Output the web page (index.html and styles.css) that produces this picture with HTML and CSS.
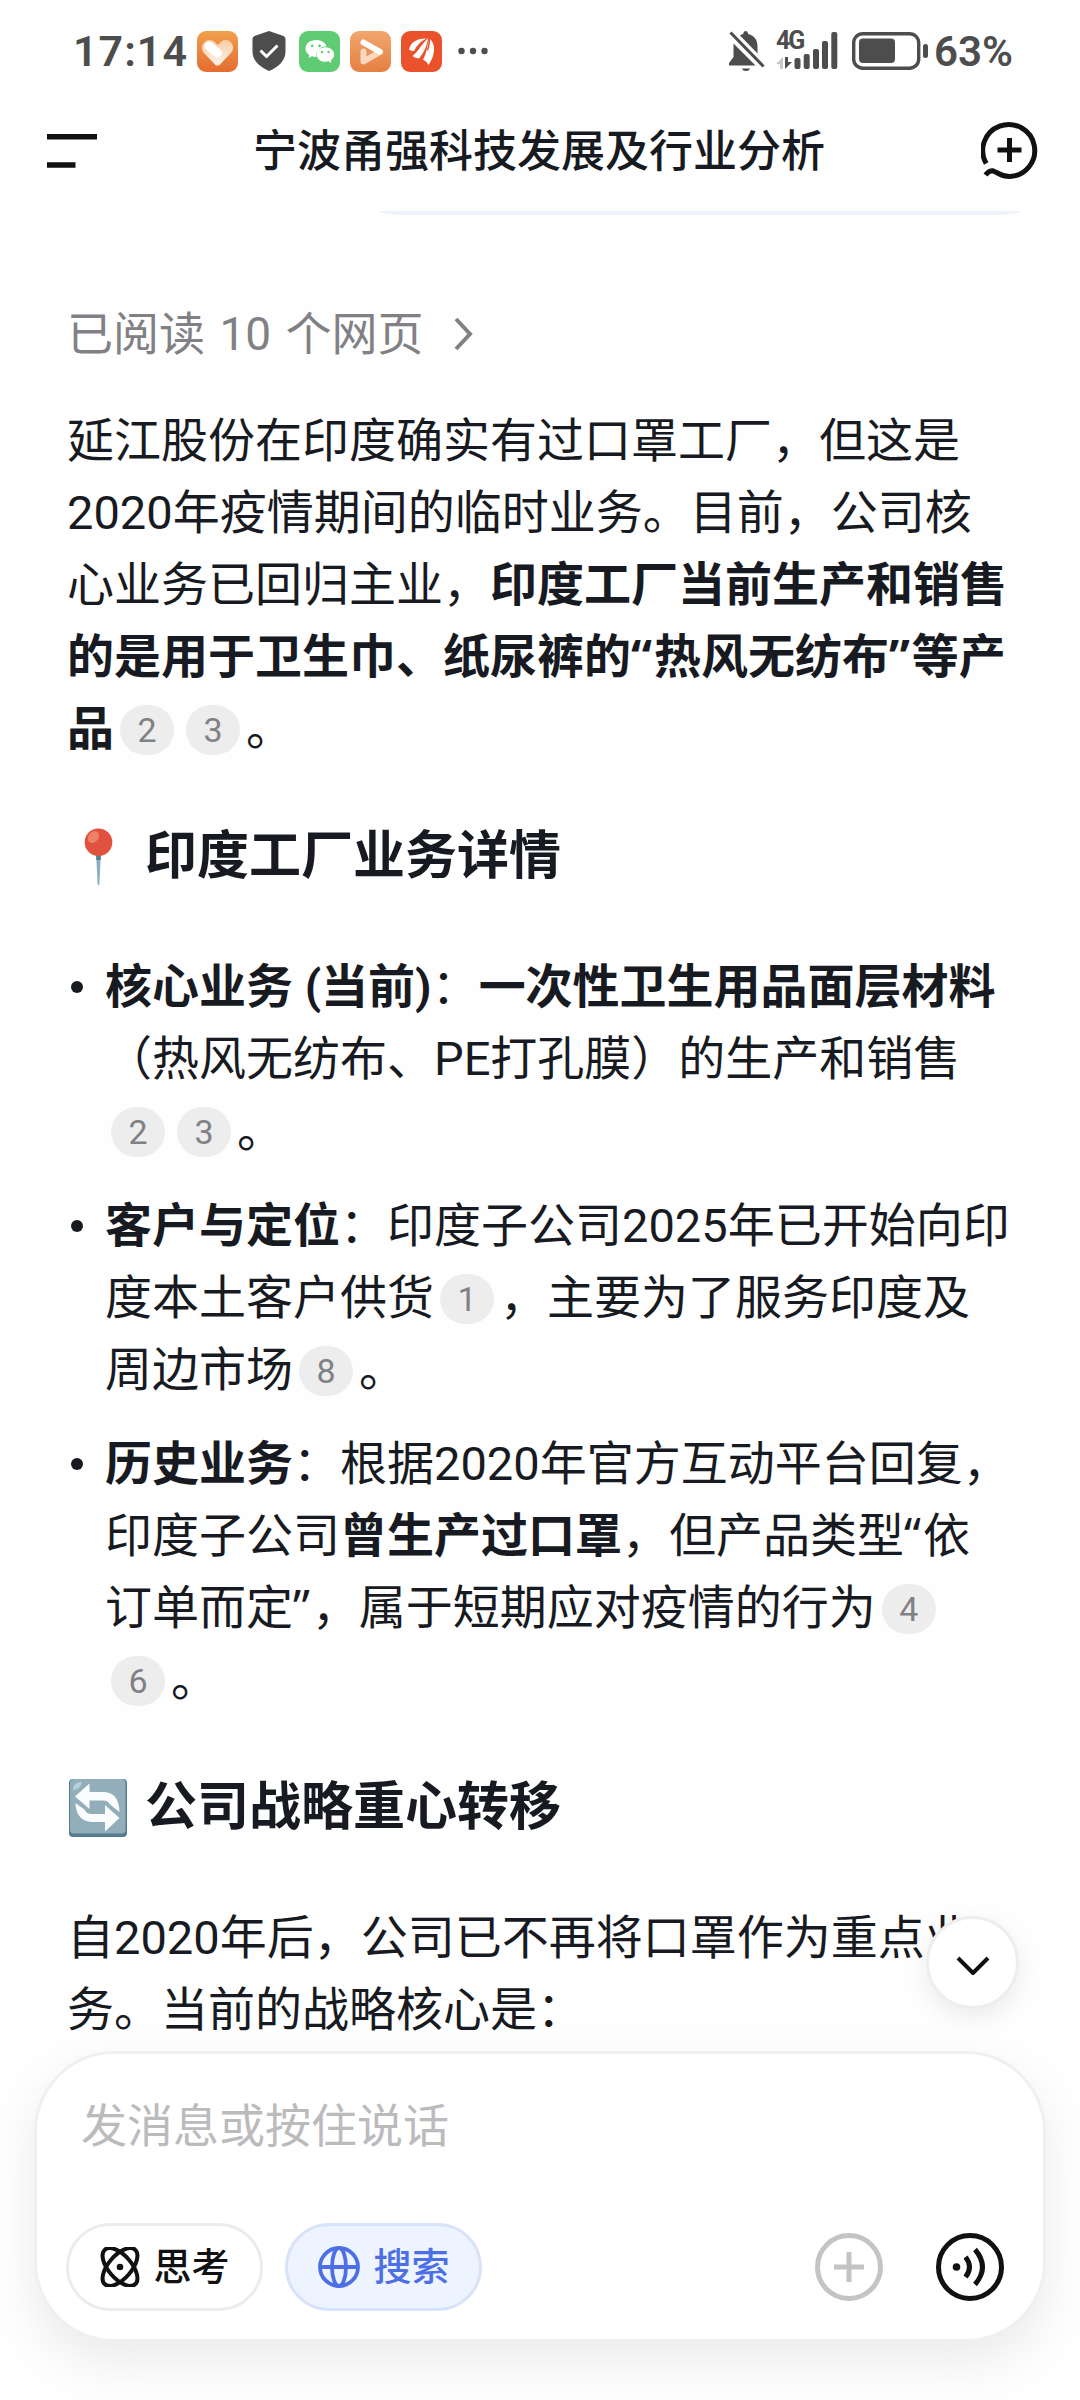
FILE: index.html
```html
<!DOCTYPE html>
<html lang="zh-CN">
<head>
  <meta charset="UTF-8">
  <meta name="viewport" content="width=device-width, initial-scale=1.0">
  <title>宁波甬强科技发展及行业分析</title>
  <link rel="stylesheet" href="styles.css">
</head>
<body>

<div class="screen">
  <!-- Status bar -->
  <div class="status-bar">
    <div class="status-left">
      <span class="clock">17:14</span>
      <svg class="app-icon" viewBox="0 0 41 41">
        <defs>
          <linearGradient id="heartBg" x1="0" y1="0" x2="0" y2="1"><stop offset="0" stop-color="#f0a04c"/><stop offset="1" stop-color="#e56c31"/></linearGradient>
          <linearGradient id="heartFade" x1="0" y1="0" x2="0" y2="1"><stop offset="0" stop-color="#f8cda8"/><stop offset="1" stop-color="#fff3ea"/></linearGradient>
        </defs>
        <rect width="41" height="41" rx="9" fill="url(#heartBg)"/>
        <path d="M20.500 34.500c-1 0-2-.6-3-1.600L7.500 22.500c-3.500-3.800-3-8.500-.2-11.300 3.300-3 7.700-2.900 10.600 0l2.800 2.700 2.800-2.700c3-2.900 7.600-2.800 10.500.2 2.800 3 2.700 7.500-.2 10.700L23.500 32.900c-1 1-2 1.600-3 1.600z" fill="url(#heartFade)"/>
        <path d="M12 15l8.500 7" stroke="#fff" stroke-width="9" stroke-linecap="round"/>
      </svg>
      <svg class="shield-icon" viewBox="0 0 34 40">
        <path d="M17 0l14.500 5q2 .8 2 3v12.500c0 9-7 15.500-16.500 19.500C7.500 36 .5 29.500.5 20.500V8q0-2.200 2-3z" fill="#4d4d4d"/>
        <path d="M8.500 19.500l6 6 11-11" fill="none" stroke="#fff" stroke-width="3"/>
      </svg>
      <svg class="app-icon" viewBox="0 0 41 41">
        <rect width="41" height="41" rx="9" fill="#5fcc74"/>
        <path d="M17 9C10.800 9 6.500 12.800 6.500 17.500c0 2.700 1.500 5 3.800 6.600l-.8 3 3.500-1.800c1.300.4 2.700.6 4.200.6-.8-5.800 4-10.600 10.300-10.600C26.500 11.600 22.300 9 17 9z" fill="#fff"/>
        <path d="M26.300 16.300c-5 0-8.800 3.200-8.800 7.200s3.800 7.300 8.800 7.300c1.200 0 2.300-.2 3.300-.5l3 1.600-.7-2.600c2-1.400 3.300-3.500 3.300-5.800 0-4-4-7.200-8.900-7.200z" fill="#fff"/>
        <g fill="#5fcc74"><circle cx="13.200" cy="14.800" r="1.400"/><circle cx="20.500" cy="14.800" r="1.400"/><circle cx="23" cy="21" r="1.200"/><circle cx="29.500" cy="21" r="1.200"/></g>
      </svg>
      <svg class="app-icon" viewBox="0 0 41 41">
        <defs>
          <linearGradient id="playBg" x1="0" y1="0" x2="0" y2="1"><stop offset="0" stop-color="#f0a76e"/><stop offset="1" stop-color="#e67f42"/></linearGradient>
        </defs>
        <rect width="41" height="41" rx="9" fill="url(#playBg)"/>
        <path d="M13.500 20.500V30.500L30 21" fill="none" stroke="#f9d8bf" stroke-width="6" stroke-linecap="round" stroke-linejoin="round"/>
        <path d="M13.500 11.500L29.500 20.500" stroke="#fff" stroke-width="6" stroke-linecap="round"/>
      </svg>
      <svg class="app-icon" viewBox="0 0 41 41">
        <rect width="41" height="41" rx="9" fill="#ea522b"/>
        <path d="M8 18.500C9.500 11.500 16 7 26 7.500 20.500 9.500 16.500 13.500 13 20q-2.500.2-5-1.500z" fill="#fff"/>
        <path d="M11.500 25C18 20 21 12 27.200 7.500 25.500 15 23.500 21 18 27.500q-4-.2-6.500-2.500z" fill="#fff"/>
        <path d="M22 28.500C26 22 26 14 28.500 7.500 35 13 34.500 24 27.500 34q-1.500-3.500-5.500-5.500z" fill="#fff"/>
        <path d="M28.500 7.500q-.2 7.500-2.200 12" fill="none" stroke="#ea522b" stroke-width="1.500"/>
      </svg>
      <svg class="more-icon" viewBox="0 0 30 8"><circle cx="3.500" cy="4" r="3.200"/><circle cx="15" cy="4" r="3.200"/><circle cx="26.500" cy="4" r="3.200"/></svg>
    </div>
    <div class="status-right">
      <svg class="mute-icon" viewBox="0 0 36 40">
        <path d="M11 4.500c1-.8 2-1.300 3.200-1.600.3-1.700 1.200-2.900 2.500-2.900s2.200 1.200 2.500 2.900C25.500 4.500 28.500 9 28.500 15v7.500z"/>
        <path d="M4.500 12.500L26.500 34.500H0v-2.500l4.500-6z"/>
        <path d="M13 37.500h8c-.5 1.700-2 2.500-4 2.500s-3.500-.8-4-2.500z"/>
        <path d="M1.500 1.500l33 34" stroke="#4d4d4d" stroke-width="3"/>
      </svg>
      <div class="signal">
        <span class="network">4G</span>
        <svg class="signal-icon" viewBox="0 0 62 40">
          <path d="M7 26v12H4v-5H0z" fill="#c8c8c8"/>
          <path d="M9 26v12l7-7h-4v-5z"/>
          <rect x="18.500" y="27" width="6" height="11" rx="2"/>
          <rect x="27.700" y="23" width="6" height="15" rx="2"/>
          <rect x="37" y="18" width="6" height="20" rx="2"/>
          <rect x="46" y="10" width="6" height="28" rx="2"/>
          <rect x="55.300" y="1" width="6" height="37" rx="2"/>
        </svg>
      </div>
      <svg class="battery-icon" viewBox="0 0 77 38">
        <rect x="1.700" y="1.700" width="65" height="34.500" rx="9" fill="none" stroke="#4d4d4d" stroke-width="3.400"/>
        <rect x="7" y="6.500" width="36" height="24.500" rx="4"/>
        <rect x="71" y="12" width="5" height="14" rx="2.500"/>
      </svg>
      <span class="percent">63%</span>
    </div>
  </div>

  <!-- Title bar -->
  <header class="title-bar">
    <svg class="menu-icon" viewBox="0 0 50 34"><path d="M0 2.800h50M0 31h28.500" stroke="#111" stroke-width="5.500"/></svg>
    <h1>宁波甬强科技发展及行业分析</h1>
    <svg class="new-chat-icon" viewBox="0 0 58 60" fill="none" stroke="#111" stroke-width="5">
      <path d="M5.200 42.500A26 26 0 1 1 28.500 55.500C20 55.500 17 51.500 12 49.800Q8 49.500 4.500 54"/>
      <path d="M28.500 17v24M16.500 29h24"/>
    </svg>
  </header>
  <div class="bubble-edge"></div>

  <!-- Answer -->
  <main class="answer">
    <div class="sources">
      <span>已阅读 10 个网页</span>
      <svg class="chevron-right" viewBox="0 0 20 34"><path d="M2 2l14 15L2 32" fill="none" stroke="#818185" stroke-width="4"/></svg>
    </div>

    <p class="intro">延江股份在印度确实有过口罩工厂，但这是<br>2020年疫情期间的临时业务。目前，公司核<br>心业务已回归主业，<strong>印度工厂当前生产和销售<br>的是用于卫生巾、纸尿裤的<span class="quote">“</span>热风无纺布<span class="quote">”</span>等产<br>品</strong><span class="cite">2</span><span class="cite">3</span>。</p>

    <h2>
      <svg class="emoji" viewBox="0 0 58 58">
        <path d="M27.200 26h4.600l-1.300 29q-1 5-2 0z" fill="#8ab0bf"/>
        <path d="M27.200 26h4.600v6h-4.600z" fill="#547f92"/>
        <circle cx="29.500" cy="14.200" r="13.800" fill="#e0513f"/>
        <ellipse cx="24.500" cy="9" rx="5" ry="6.500" transform="rotate(35 24.500 9)" fill="#ee8066"/>
      </svg>
      <span>印度工厂业务详情</span>
    </h2>

    <ul>
      <li><strong>核心业务 (当前)</strong>：<strong>一次性卫生用品面层材料</strong><br>（热风无纺布、PE打孔膜）的生产和销售<br><span class="cite">2</span><span class="cite">3</span>。</li>
      <li><strong>客户与定位</strong>：印度子公司2025年已开始向印<br>度本土客户供货<span class="cite">1</span>，主要为了服务印度及<br>周边市场<span class="cite">8</span>。</li>
      <li><strong>历史业务</strong>：根据2020年官方互动平台回复，<br>印度子公司<strong>曾生产过口罩</strong>，但产品类型<span class="quote">“</span>依<br>订单而定<span class="quote">”</span>，属于短期应对疫情的行为<span class="cite">4</span><br><span class="cite">6</span>。</li>
    </ul>

    <h2>
      <svg class="emoji" viewBox="0 0 58 58">
        <rect width="58" height="58" rx="4" fill="#557b8d"/>
        <rect x="1" width="55.500" height="54.500" rx="4" fill="#92aebb"/>
        <path d="M4 11q0-8 9-8-1 7-9 8z" fill="#b4d0dc"/>
        <path d="M6 17.500L20.500 4.500V13H34Q50 13 50.500 33L41 25.500Q39 21.500 34 21.500H20.500V30z" fill="#fbfcfd"/>
        <path d="M50.500 39L36 52.500V43H23Q7 42 6.500 24L16 31Q17 35 23 35H36V26z" fill="#fbfcfd"/>
      </svg>
      <span>公司战略重心转移</span>
    </h2>

    <p class="strategy">自2020年后，公司已不再将口罩作为重点业<br>务。当前的战略核心是：</p>
  </main>

  <button class="scroll-down">
    <svg viewBox="0 0 34 20"><path d="M2 2l15 15L32 2" fill="none" stroke="#111" stroke-width="4" stroke-linejoin="round"/></svg>
  </button>

  <!-- Message input -->
  <footer class="composer">
    <div class="placeholder">发消息或按住说话</div>
    <div class="tools">
      <button class="pill">
        <svg class="atom-icon" viewBox="0 0 40 40" fill="none" stroke="#111" stroke-width="4">
          <ellipse cx="20" cy="20" rx="23" ry="11.500" transform="rotate(49 20 20)"/>
          <ellipse cx="20" cy="20" rx="23" ry="11.500" transform="rotate(-49 20 20)"/>
          <circle cx="20" cy="20" r="3.300" fill="#111" stroke="none"/>
        </svg>
        <span>思考</span>
      </button>
      <button class="pill active">
        <svg class="globe-icon" viewBox="0 0 42 42" fill="none" stroke="#4d6fe5" stroke-width="3.800">
          <circle cx="21" cy="21" r="19"/>
          <ellipse cx="21" cy="21" rx="7" ry="19"/>
          <path d="M2 21h38"/>
        </svg>
        <span>搜索</span>
      </button>
      <svg class="round-icon add" viewBox="0 0 68 68" fill="none" stroke="#c4c4c4" stroke-width="5">
        <circle cx="34" cy="34" r="31.500"/>
        <path d="M34 19v30M19 34h30"/>
      </svg>
      <svg class="round-icon" viewBox="0 0 68 68" fill="none" stroke="#111" stroke-width="5">
        <circle cx="34" cy="34" r="31.500"/>
        <circle cx="20.500" cy="34" r="3.800" fill="#111" stroke="none"/>
        <path d="M29.500 24q8 10 0 20M39 16.500q15 17.500 0 35"/>
      </svg>
    </div>
  </footer>
</div>

</body>
</html>
```

FILE: styles.css
```css
body {
  font-family: Roboto, "Noto Sans CJK SC", sans-serif;
  background: #fff;
  color: #181a22;
  margin: 0;
  text-spacing-trim: space-all;
}

.screen {
  width: 1080px;
  height: 2400px;
  position: relative;
  overflow: hidden;
  background: #fefefe;
  white-space: nowrap;
}

svg {
  display: block;
  flex: none;
}

button {
  font-family: inherit;
  padding: 0;
}

/* Status bar */
.status-bar {
  height: 102px;
  box-sizing: border-box;
  padding: 0 68px 0 73px;
  display: flex;
  justify-content: space-between;
  align-items: center;
  color: #4d4d4d;
  font-weight: 600;
}

.status-bar svg {
  fill: #4d4d4d;
}

.status-left, .status-right {
  display: flex;
  align-items: center;
}

.clock {
  font-size: 43px;
  width: 124px;
  letter-spacing: 1px;
}

.app-icon {
  width: 41px;
  height: 41px;
  margin-right: 10px;
}

.shield-icon {
  width: 34px;
  height: 40px;
  margin: 0 13px 0 4px;
}

.more-icon {
  width: 30px;
  height: 8px;
  margin-left: 6px;
}

.mute-icon {
  width: 36px;
  height: 40px;
  margin-right: 11px;
}

.signal {
  position: relative;
}

.network {
  position: absolute;
  left: 0;
  top: 0;
  font-size: 25px;
  line-height: 20px;
  font-weight: 700;
  letter-spacing: -2px;
}

.signal-icon {
  width: 62px;
  height: 40px;
  margin-right: 14px;
}

.battery-icon {
  width: 77px;
  height: 38px;
  margin-right: 5px;
}

.percent {
  font-size: 42px;
  width: 78px;
}

/* Title bar */
.title-bar {
  height: 96px;
  padding: 0 41px 0 47px;
  display: flex;
  justify-content: space-between;
  align-items: center;
}

.menu-icon {
  width: 50px;
  height: 34px;
  padding-top: 1px;
}

.title-bar h1 {
  margin: 0;
  padding-top: 4px;
  font-size: 44px;
  font-weight: 500;
  line-height: 60px;
}

.new-chat-icon {
  width: 58px;
  height: 60px;
  padding-top: 2px;
}

/* Bottom of the message bubble scrolled under the title bar */
.bubble-edge {
  height: 4px;
  margin: 13px 59px 0 379px;
  background: #eef3f9;
  border-radius: 0 0 30px 30px / 0 0 4px 4px;
}

/* Answer */
.answer {
  padding: 83px 0 0 67px;
  font-size: 47px;
  line-height: 72px;
}

.sources {
  height: 72px;
  display: flex;
  align-items: center;
  gap: 30px;
  font-size: 46px;
  word-spacing: 3px;
  color: #818185;
}

.chevron-right {
  width: 20px;
  height: 34px;
}

.answer p {
  margin: 0;
}

.answer .intro {
  margin-top: 35px;
}

.answer strong {
  font-weight: 700;
}

.quote {
  font-family: "Noto Sans", sans-serif;
  line-height: 1;
  letter-spacing: 2px;
}

.cite {
  display: inline-block;
  width: 54px;
  height: 50px;
  margin: 0 6px;
  border-radius: 25px;
  background: #ededed;
  color: #818185;
  font-size: 34px;
  line-height: 51px;
  text-align: center;
  vertical-align: 3px;
}

.answer h2 {
  margin: 56px 0 58px;
  height: 72px;
  display: flex;
  align-items: center;
  gap: 18px;
  font-size: 52px;
  font-weight: 700;
}

.emoji {
  width: 58px;
  height: 58px;
  margin-left: 2px;
}

.answer ul {
  list-style: none;
  margin: 0;
  padding: 0 0 0 38px;
  display: flex;
  flex-direction: column;
  gap: 22.5px;
}

.answer li {
  position: relative;
}

.answer li::before {
  content: "";
  position: absolute;
  left: -34px;
  top: 30px;
  width: 12px;
  height: 12px;
  border-radius: 50%;
  background: #181a22;
}

/* Scroll to bottom */
.scroll-down {
  position: absolute;
  left: 926px;
  top: 1916px;
  width: 93px;
  height: 93px;
  display: flex;
  align-items: center;
  justify-content: center;
  background: #fff;
  border: 3px solid #eee;
  border-radius: 50%;
  box-shadow: 0 8px 24px rgba(0, 0, 0, 0.08);
}

.scroll-down svg {
  width: 34px;
  height: 20px;
  margin-top: 6px;
}

/* Message input */
.composer {
  position: absolute;
  left: 34px;
  right: 34px;
  top: 2051px;
  height: 291px;
  box-sizing: border-box;
  padding: 39px 39px 28px 29px;
  display: flex;
  flex-direction: column;
  justify-content: space-between;
  background: #fff;
  border: 3px solid #f0f0f0;
  border-radius: 80px;
  box-shadow: 0 20px 50px rgba(0, 0, 0, 0.08);
}

.placeholder {
  padding-left: 15px;
  font-size: 46px;
  line-height: 66px;
  color: #bbbbbd;
}

.tools {
  display: flex;
  align-items: center;
}

.pill {
  width: 197px;
  height: 88px;
  margin-right: 22px;
  display: flex;
  align-items: center;
  justify-content: center;
  gap: 13px;
  padding-left: 1px;
  background: #fff;
  border: 3px solid #ececec;
  border-radius: 44px;
  color: #111;
  font-size: 38px;
  font-weight: 500;
  line-height: 50px;
}

.pill.active {
  background: #edf3ff;
  border-color: #d8e2f8;
  color: #4d6fe5;
}

.atom-icon {
  width: 40px;
  height: 40px;
}

.globe-icon {
  width: 42px;
  height: 42px;
}

.round-icon {
  width: 68px;
  height: 68px;
}

.round-icon.add {
  margin: 0 53px 0 auto;
}
```
